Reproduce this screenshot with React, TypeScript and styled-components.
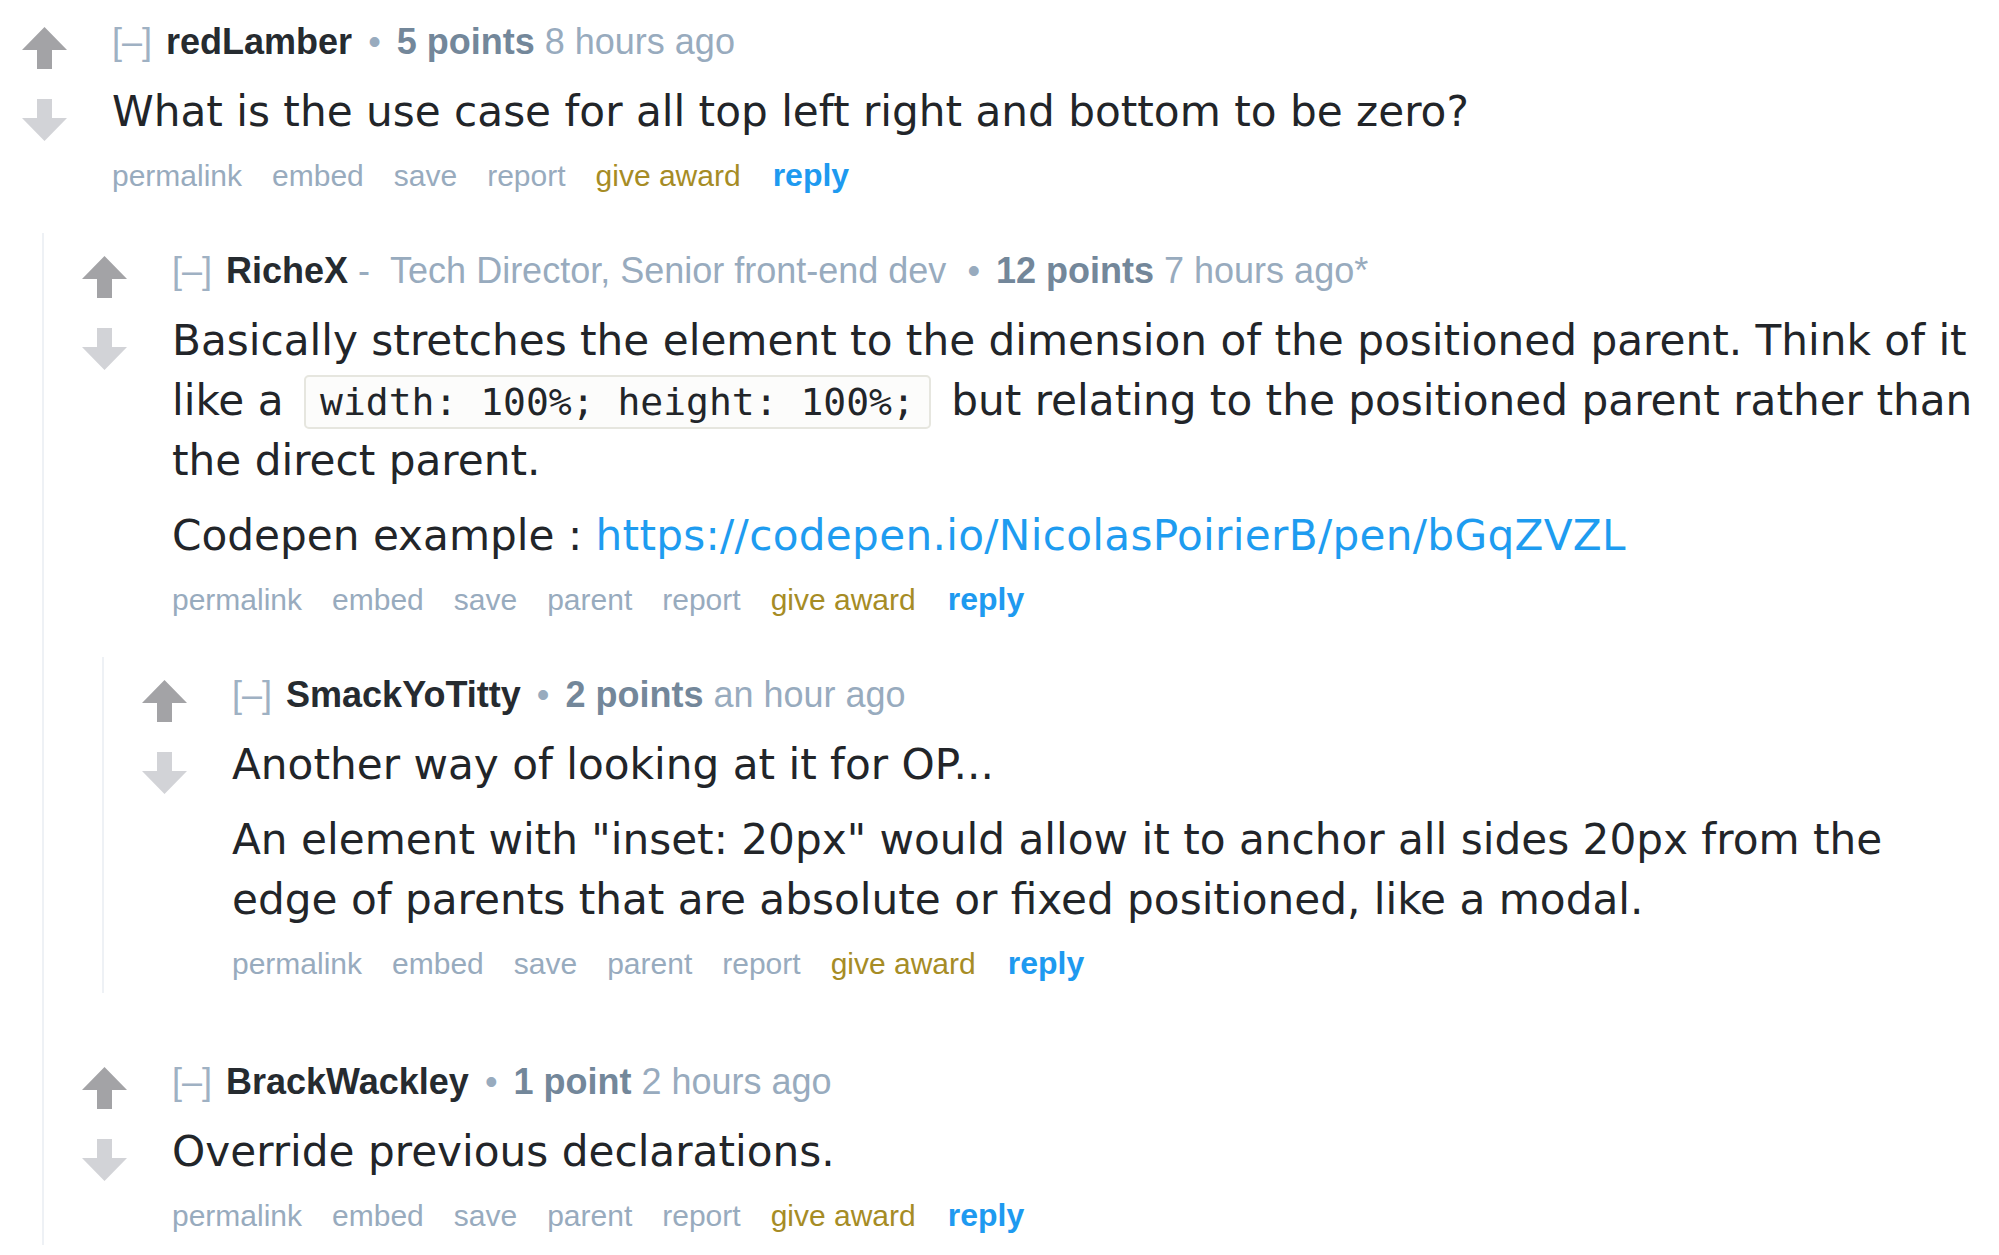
import styled, { createGlobalStyle } from "styled-components";

const GlobalStyle = createGlobalStyle`
  html, body {
    margin: 0;
    background: #ffffff;
  }
`;

const Page = styled.div`
  width: 1999px;
  box-sizing: border-box;
  padding: 20px 0 0 22px;
  overflow: hidden;
`;

const CommentBox = styled.div`
  & + & {
    margin-top: 67px;
  }
`;

const Row = styled.div`
  display: flex;
`;

const Votes = styled.div`
  flex: none;
  width: 90px;
  display: flex;
  flex-direction: column;
  gap: 30px;
  padding-top: 7px;
`;

const Entry = styled.div`
  flex: 1;
  min-width: 0;
`;

const Tagline = styled.p`
  margin: 0;
  font: 36px/44px "Liberation Sans", Arial, sans-serif;
  color: #98abbe;
  white-space: nowrap;
`;

const Expand = styled.span`
  color: #9fb1c3;
  margin-right: 4px;
`;

const Author = styled.span`
  font-weight: bold;
  color: #262b30;
`;

const Flair = styled.span`
  color: #98abbe;
  margin: 0 5px 0 20px;
`;

const Bullet = styled.span`
  margin: 0 16px;
  color: #98abbe;
`;

const Score = styled.span`
  font-weight: bold;
  color: #73879a;
`;

const Body = styled.div`
  margin-top: 18px;
  font: 42.2px/60px "DejaVu Sans", Verdana, sans-serif;
  color: #222529;

  p {
    margin: 0;
  }
  p + p {
    margin-top: 15px;
  }
`;

const Code = styled.code`
  font: 38px "DejaVu Sans Mono", monospace;
  background: #fcfcfb;
  border: 2px solid #e6e6df;
  border-radius: 5px;
  padding: 3px 14px;
  margin: 0 7px;
`;

const Link = styled.a`
  color: #1e9cf0;
  text-decoration: none;
  letter-spacing: 0.3px;
`;

const Buttons = styled.ul`
  margin: 13px 0 0;
  padding: 0;
  list-style: none;
  display: flex;
  align-items: baseline;
  gap: 30px;
  font: 30px/40px "Liberation Sans", Arial, sans-serif;
  color: #98abbe;
`;

const Button = styled.li<{ $kind?: "award" | "reply" }>`
  color: ${(p) =>
    p.$kind === "award" ? "#a68c25" : p.$kind === "reply" ? "#1e9af0" : "#98abbe"};
  font-weight: ${(p) => (p.$kind === "reply" ? "bold" : "normal")};
  font-size: ${(p) => (p.$kind === "reply" ? "32px" : "30px")};
  margin-left: ${(p) => (p.$kind === "reply" ? "2px" : "0")};
`;

const Children = styled.div`
  margin: 37px 0 0 20px;
  padding: 16px 0 9px 38px;
  border-left: 2px solid #eef1f5;
`;

const Arrow = ({ down }: { down?: boolean }) => (
  <svg width="45" height="42" viewBox="0 0 45 42" style={{ display: "block" }}>
    <path
      d="M22.5 0 L45 23 L30 23 L30 42 L15 42 L15 23 L0 23 Z"
      fill={down ? "#d2d3d7" : "#a3a3a6"}
      transform={down ? "rotate(180 22.5 21)" : undefined}
    />
  </svg>
);

type CommentProps = {
  author: string;
  flair?: string;
  score: string;
  time: string;
  parent?: boolean;
  children?: React.ReactNode;
  replies?: React.ReactNode;
};

const Comment = ({ author, flair, score, time, parent, children, replies }: CommentProps) => (
  <CommentBox>
    <Row>
      <Votes>
        <Arrow />
        <Arrow down />
      </Votes>
      <Entry>
        <Tagline>
          <Expand>[–]</Expand> <Author>{author}</Author>
          {flair && (
            <>
              {" -"}
              <Flair>{flair}</Flair>
            </>
          )}
          <Bullet>•</Bullet>
          <Score>{score}</Score> {time}
        </Tagline>
        <Body>{children}</Body>
        <Buttons>
          <Button>permalink</Button>
          <Button>embed</Button>
          <Button>save</Button>
          {parent && <Button>parent</Button>}
          <Button>report</Button>
          <Button $kind="award">give award</Button>
          <Button $kind="reply">reply</Button>
        </Buttons>
      </Entry>
    </Row>
    {replies && <Children>{replies}</Children>}
  </CommentBox>
);

export default function App() {
  return (
    <>
      <GlobalStyle />
      <Page>
        <Comment
          author="redLamber"
          score="5 points"
          time="8 hours ago"
          replies={
            <>
              <Comment
                author="RicheX"
                flair="Tech Director, Senior front-end dev"
                score="12 points"
                time="7 hours ago*"
                parent
                replies={
                  <Comment author="SmackYoTitty" score="2 points" time="an hour ago" parent>
                    <p>Another way of looking at it for OP...</p>
                    <p>
                      An element with "inset: 20px" would allow it to anchor all sides 20px
                      from the edge of parents that are absolute or fixed positioned, like a
                      modal.
                    </p>
                  </Comment>
                }
              >
                <p>
                  Basically stretches the element to the dimension of the positioned parent.
                  Think of it like a <Code>width: 100%; height: 100%;</Code> but relating to
                  the positioned parent rather than the direct parent.
                </p>
                <p>
                  Codepen example :{" "}
                  <Link href="#">https://codepen.io/NicolasPoirierB/pen/bGqZVZL</Link>
                </p>
              </Comment>
              <Comment author="BrackWackley" score="1 point" time="2 hours ago" parent>
                <p>Override previous declarations.</p>
              </Comment>
            </>
          }
        >
          <p>What is the use case for all top left right and bottom to be zero?</p>
        </Comment>
      </Page>
    </>
  );
}
